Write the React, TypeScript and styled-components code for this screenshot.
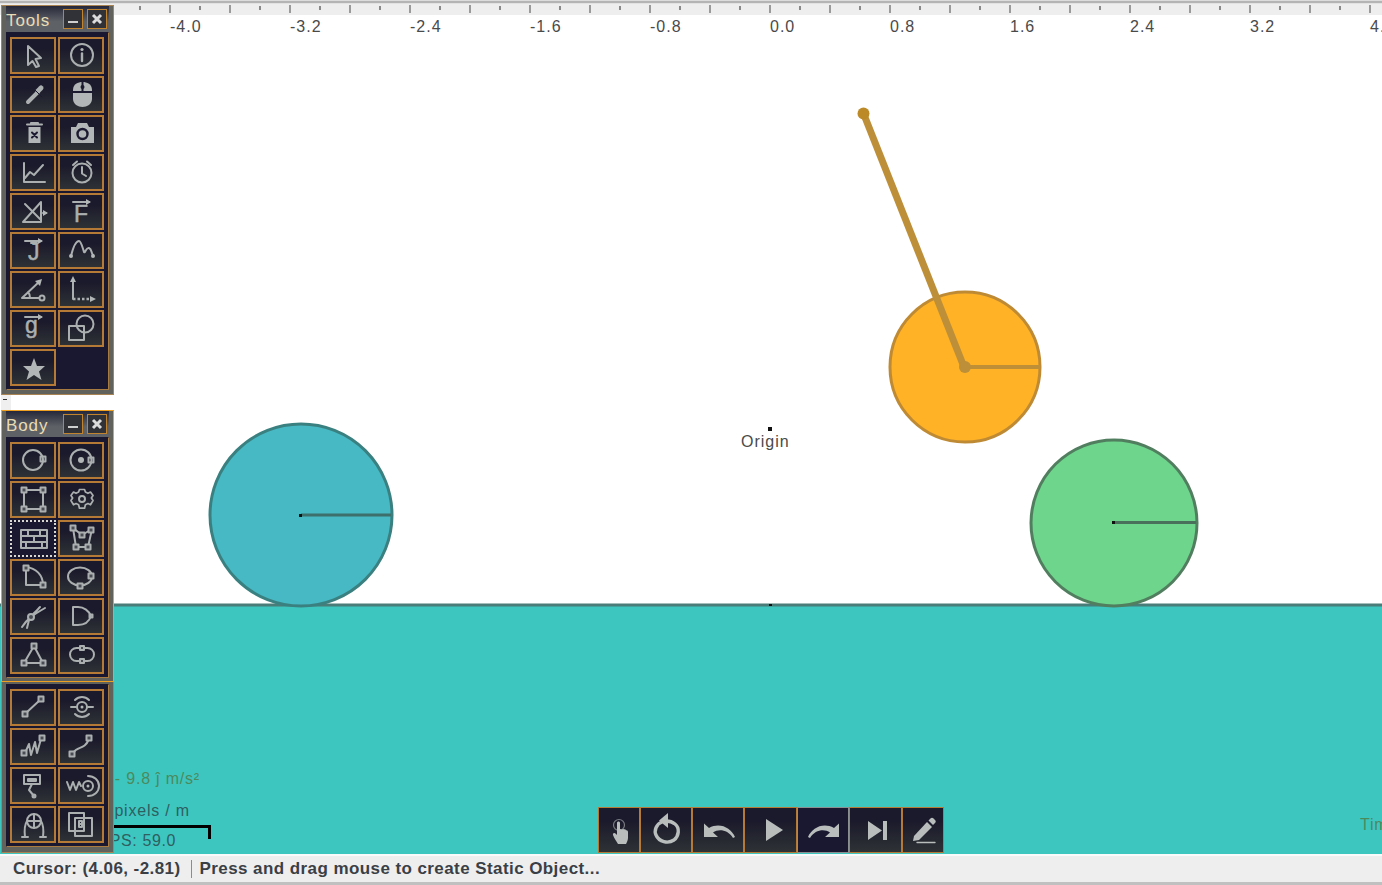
import { ReactNode } from 'react'
import styled, { createGlobalStyle } from 'styled-components'

const GlobalStyle = createGlobalStyle`
  html, body {
    margin: 0;
    padding: 0;
    background: #ffffff;
    overflow: hidden;
  }
  body {
    font-family: "Liberation Sans", Arial, sans-serif;
  }
`

const S = {
  Root: styled.div`
    position: relative;
    width: 1382px;
    height: 885px;
    display: flex;
    flex-direction: column;
    overflow: hidden;
  `,
  TopEdge: styled.div`
    height: 4px;
    background: linear-gradient(#dcdcdc 0 1px, #b4b4b4 1px 3px, #e2e2e2 3px);
  `,
  Ruler: styled.svg`
    display: block;
    flex: none;
    height: 11px;
    width: 1382px;
    background: #eeeeee;
  `,
  Stage: styled.div`
    position: relative;
    flex: 1;
    background: #ffffff;
    overflow: hidden;
  `,
  Scene: styled.svg`
    position: absolute;
    inset: 0;
    width: 100%;
    height: 100%;
  `,
  RulerLabels: styled.div`
    position: absolute;
    top: 3px;
    left: 170px;
    display: flex;
    font-size: 16px;
    letter-spacing: 1px;
    line-height: 18px;
    color: #4a4a4a;
  `,
  RulerLabel: styled.span`
    flex: none;
    width: 120px;
  `,
  Origin: styled.span`
    position: absolute;
    left: 741px;
    top: 418px;
    font-size: 16px;
    letter-spacing: 1px;
    line-height: 18px;
    color: #4a4a4a;
  `,
  Gravity: styled.span`
    position: absolute;
    right: 1182px;
    top: 755px;
    font-size: 16px;
    letter-spacing: 0.8px;
    line-height: 18px;
    color: #4c8a5c;
    white-space: nowrap;
  `,
  Scale: styled.span`
    position: absolute;
    right: 1192px;
    top: 787px;
    font-size: 16px;
    letter-spacing: 0.8px;
    line-height: 18px;
    color: #2f5f5f;
    white-space: nowrap;
  `,
  ScaleBar: styled.div`
    position: absolute;
    left: 104px;
    top: 810px;
    width: 104px;
    height: 11px;
    border-top: 3px solid #000000;
    border-right: 3px solid #000000;
  `,
  Fps: styled.span`
    position: absolute;
    right: 1206px;
    top: 817px;
    font-size: 16px;
    letter-spacing: 0.6px;
    line-height: 18px;
    color: #2f5f5f;
    white-space: nowrap;
  `,
  Time: styled.span`
    position: absolute;
    left: 1360px;
    top: 801px;
    font-size: 16px;
    letter-spacing: 0.8px;
    line-height: 18px;
    color: #4c8a5c;
    white-space: nowrap;
  `,
  Dock: styled.div`
    position: absolute;
    left: 1px;
    top: 5px;
    width: 113px;
    display: flex;
    flex-direction: column;
  `,
  Tick: styled.div`
    height: 15px;
    margin-right: 103px;
    background: #efefef;
    position: relative;
    &::after {
      content: '';
      position: absolute;
      left: 2px;
      top: 4px;
      width: 4px;
      height: 1px;
      background: #333333;
    }
  `,
  Panel: styled.section<{ $active?: boolean; $bare?: boolean }>`
    box-sizing: border-box;
    background: #62625c;
    border: 1px solid ${p => (p.$active ? '#f0a020' : '#a98452')};
    border-top-width: ${p => (p.$bare ? 0 : 1)}px;
    padding: ${p => (p.$bare ? '2px 4px 5px' : p.$active ? '0 4px 3px' : '0 4px 4px')};
  `,
  TitleBar: styled.div`
    height: 26px;
    display: flex;
    align-items: center;
    gap: 4px;
    padding-right: 2px;
    background: linear-gradient(#26283a, #5e6166 60%);
  `,
  Title: styled.span`
    flex: 1;
    padding-top: 3px;
    font-size: 17px;
    letter-spacing: 0.9px;
    color: #e9dcb4;
  `,
  WindowButton: styled.button`
    box-sizing: border-box;
    width: 20px;
    height: 20px;
    padding: 0;
    display: grid;
    place-items: center;
    background: #303238;
    border: 1px solid #c2832f;
  `,
  Frame: styled.div`
    display: grid;
    grid-template-columns: 46px 46px;
    grid-auto-rows: 37px;
    column-gap: 2px;
    row-gap: 2px;
    padding: 4px 4px 3px 3px;
    background: #1a1830;
    border: 1px solid #1a1830;
    border-right-color: #a87c40;
    border-bottom-color: #a87c40;
  `,
  ToolButton: styled.button<{ $dotted?: boolean }>`
    box-sizing: border-box;
    padding: 0;
    width: 46px;
    height: 37px;
    background: ${p => (p.$dotted ? '#1a1830' : 'linear-gradient(#1b1a2c 30%, #2e3235)')};
    border: ${p => (p.$dotted ? '2px dotted #d8d8d0' : '2px solid #b57a35')};
    display: block;
    overflow: hidden;
  `,
  Glyph: styled.svg`
    display: block;
    margin: -2px;
    width: 46px;
    height: 37px;
    fill: none;
    stroke: #abafaf;
    stroke-width: 2;
    stroke-linecap: round;
    stroke-linejoin: round;
    .solid {
      fill: #b2b6b6;
      stroke: none;
    }
    .letter {
      fill: #abafaf;
      stroke: #abafaf;
      stroke-width: 0.5;
      font-family: "Liberation Sans", Arial, sans-serif;
      font-size: 23px;
    }
  `,
  Toolbar: styled.div`
    position: absolute;
    left: 598px;
    bottom: 1px;
    display: flex;
    height: 46px;
  `,
  BarButton: styled.button<{ $w: number; $flat?: boolean }>`
    box-sizing: border-box;
    padding: 0;
    width: ${p => p.$w}px;
    height: 46px;
    background: ${p => (p.$flat ? '#1a1830' : 'linear-gradient(#1b1a2c 30%, #2e3235)')};
    border: 1px solid ${p => (p.$flat ? '#8b8f8f' : '#b57a35')};
    overflow: hidden;
  `,
  BarGlyph: styled.svg<{ $w: number }>`
    display: block;
    margin: -1px;
    width: ${p => p.$w}px;
    height: 46px;
    fill: #b9bebd;
    stroke: none;
    .line {
      fill: none;
      stroke: #b9bebd;
      stroke-linecap: round;
      stroke-linejoin: round;
    }
  `,
  Status: styled.footer`
    box-sizing: border-box;
    flex: none;
    height: 31px;
    padding: 2px 0 5px 13px;
    display: flex;
    align-items: center;
    background: #eeeeee;
    border-top: 2px solid #fafafa;
    box-shadow: inset 0 -4px 0 -1px #c0c0c0, inset 0 -1px 0 #d8d8d8;
    font-size: 17px;
    font-weight: 700;
    letter-spacing: 0.42px;
    color: #3a3f46;
  `,
  Separator: styled.span`
    width: 1px;
    height: 18px;
    margin: 0 8px 0 10px;
    background: #8c8c8c;
  `,
  Ticks: styled.g`
    stroke: #9a9a9a;
  `
}

const Handle = ({ x, y, s = 5 }: { x: number; y: number; s?: number }) => (
  <rect x={x - s / 2} y={y - s / 2} width={s} height={s} />
)

const Arrow = ({ x1, x2, y }: { x1: number; x2: number; y: number }) => (
  <>
    <path d={`M${x1} ${y}H${x2}`} />
    <path className='solid' d={`M${x2 + 2} ${y}l-5 -3v6z`} />
  </>
)

const tools: ReactNode[] = [
  <path d='M18 9L31 21 25.500 22 29 29 26 30 22.500 24 18 28Z' />,
  <>
    <circle cx='24' cy='18' r='11' />
    <circle className='solid' cx='24' cy='12.500' r='1.600' />
    <path strokeWidth='2.400' d='M24 16.500V24' />
  </>,
  <>
    <path strokeWidth='4' d='M18 26L28 16' />
    <path strokeWidth='5' d='M28 15L31 12' />
    <path stroke='#1c1a30' strokeWidth='1' d='M24 13L32 21' />
  </>,
  <>
    <path className='solid' d='M15 14C15 8 20 6 24.500 6S34 8 34 14V23C34 28 29 31 24.500 31S15 28 15 23Z' />
    <path stroke='#1c1a30' d='M15 16H34M24.500 6V16' />
    <circle cx='24.500' cy='11' r='1' stroke='#1c1a30' />
  </>,
  <>
    <path d='M17 9.500H32M21 9.500V8H28V9.500' />
    <path className='solid' d='M18.500 12H30.500V28H18.500Z' />
    <path stroke='#1c1a30' strokeWidth='2' d='M22 17.500L27 22.500M27 17.500L22 22.500' />
  </>,
  <>
    <path className='solid' d='M13 12H18L20 8H29L31 12H36V28H13Z' />
    <circle cx='24.500' cy='19' r='5' stroke='#1c1a30' strokeWidth='2.400' />
  </>,
  <path d='M14 9V28H35M15 24L20 18 24 21 33 11' />,
  <>
    <circle cx='24' cy='19' r='9.500' />
    <path d='M24 13V19.500L28 22M15 11L19 7.500M33 11L29 7.500' />
  </>,
  <>
    <path d='M13 29H31V9ZM15 11L30 26' />
    <Arrow x1={33} x2={36} y={20} />
  </>,
  <>
    <text className='letter' x='16' y='29'>F</text>
    <Arrow x1={15} x2={31} y={9} />
  </>,
  <>
    <text className='letter' x='18' y='28'>J</text>
    <path d='M21 11H27' />
    <Arrow x1={15} x2={31} y={9} />
  </>,
  <>
    <path d='M13 24C16 12 19 9 21 9S24 14 26 20C27 22 28 15 31 16S33 21 35 23' />
    <circle className='solid' cx='13' cy='24' r='2' />
    <circle className='solid' cx='35' cy='24' r='2' />
  </>,
  <>
    <path d='M12 27L30 10M12 27H29M18 21C20 23 20 25 20 27' />
    <path className='solid' d='M32 8L25 10 30 15Z' />
    <circle cx='32' cy='27' r='2.500' />
  </>,
  <>
    <path d='M15 10V28' />
    <path strokeWidth='2.400' strokeDasharray='2.500 2' strokeLinecap='butt' d='M15 28H34' />
    <path className='solid' d='M15 5L12 11H18ZM38 28L32 25V31Z' />
  </>,
  <>
    <text className='letter' x='15' y='23'>g</text>
    <Arrow x1={15} x2={31} y={7} />
  </>,
  <>
    <rect x='11' y='16' width='15' height='14' />
    <circle cx='27' cy='14' r='8.500' />
  </>,
  <path className='solid' d='M24 9L27 17H35L29 22.500 31.500 31 24 26 16.500 31 19 22.500 13 17H21Z' />
]

const bodies: { icon: ReactNode; dotted?: boolean }[] = [
  { icon: <><circle cx='23' cy='18' r='10' /><Handle x={33} y={17} /></> },
  { icon: <><circle cx='23' cy='18' r='10.500' /><circle className='solid' cx='23' cy='18' r='3' /><Handle x={33} y={18} /></> },
  { icon: <><rect x='14' y='9' width='19' height='19' /><g fill='#4a4c54'><Handle x={14} y={9} /><Handle x={33} y={9} /><Handle x={14} y={28} /><Handle x={33} y={28} /></g></> },
  { icon: <><path transform='translate(3.600 1.700) scale(0.85)' d='M21 8H27L28 11 31 12.500 34 11 37 15 35 18 37 21 34 26 31 24.500 28 26 27 30H21L20 26 17 24.500 14 26 11 21 13 18 11 15 14 11 17 12.500 20 11Z' /><circle cx='24' cy='18' r='3' /></> },
  { dotted: true, icon: <path d='M11 10H37V28H11ZM11 16H37M11 22H37M18 10V16M30 10V16M24 16V22M16 22V28M32 22V28' /> },
  { icon: <><path d='M15 8L24 15 34 9 30 27H18Z' /><g fill='#4a4c54'><Handle x={15} y={8} /><Handle x={24} y={15} /><Handle x={33} y={10} /><Handle x={18} y={27} /><Handle x={30} y={27} /></g></> },
  { icon: <><path d='M16 8V26H33C33 16 26 9 16 8Z' /><g fill='#4a4c54'><Handle x={16} y={9} /><Handle x={33} y={26} /></g></> },
  { icon: <><ellipse cx='22' cy='17.500' rx='12' ry='9' /><g fill='#4a4c54'><Handle x={33} y={17} /><Handle x={22} y={27} /></g></> },
  { icon: <><path d='M12 29C17 21 23 17 35 10M17 30L19 22 24 15C27 13 28 11 30 9' /><circle cx='21' cy='19' r='3' fill='#4a4c54' /></> },
  { icon: <><path d='M15 9H20C26 9 31 13 33 18 31 24 26 27 20 27H15Z' /><Handle x={33} y={18} s={3} /></> },
  { icon: <><path d='M24 9L33 26H14Z' /><g fill='#4a4c54'><Handle x={24} y={9} /><Handle x={14} y={26} /><Handle x={33} y={26} /></g></> },
  { icon: <><rect x='12' y='11' width='24' height='13' rx='6.500' /><g fill='#4a4c54'><Handle x={24} y={11} s={4} /><Handle x={24} y={24} s={4} /></g></> }
]

const joints: ReactNode[] = [
  <><path d='M16 24L30 11' /><g fill='#4a4c54'><Handle x={15} y={25} /><Handle x={31} y={10} /></g></>,
  <><circle cx='24' cy='18' r='5' /><circle className='solid' cx='24' cy='18' r='1.500' /><path d='M13 18H18M30 18H35M17 11C21 7 27 7 31 11M17 25C21 29 27 29 31 25' /></>,
  <><path d='M15 25L19 16 21 27 25 14 27 25 31 11' /><g fill='#4a4c54'><Handle x={14} y={25} /><Handle x={32} y={10} /></g></>,
  <><path d='M15 25C20 17 26 23 31 11' /><g fill='#4a4c54'><Handle x={14} y={26} /><Handle x={31} y={10} /></g></>,
  <><path d='M14 8H30V17H14ZM18 12H26V14H18ZM22 17L19 23 24 29' /><circle cx='24' cy='29' r='1.500' /></>,
  <><path d='M9 15L12 23 15 15 18 23 21 15 23 19' /><circle cx='30' cy='19' r='5' /><circle className='solid' cx='30' cy='19' r='1.500' /><path d='M30 9C36 9 41 13 41 19S36 29 30 29' /></>,
  <><circle cx='24' cy='15' r='7' /><path d='M17 15H31M24 8V22M15 31C14 22 15 18 17 15M33 31C34 22 33 18 31 15M12 31H18M30 31H36' /></>,
  <><rect x='11' y='7' width='15' height='18' /><rect x='17' y='12' width='17' height='18' /><path d='M21 15H24V21H21ZM21 18H24' /></>
]

const BarIcon = ({ w, flat, children }: { w: number; flat?: boolean; children: ReactNode }) => (
  <S.BarButton $w={w} $flat={flat} type='button'>
    <S.BarGlyph $w={w} viewBox={`0 0 ${w} 46`}>{children}</S.BarGlyph>
  </S.BarButton>
)

const Palette = ({ items }: { items: { icon: ReactNode; dotted?: boolean }[] }) => (
  <S.Frame>
    {items.map((item, i) => (
      <S.ToolButton key={i} $dotted={item.dotted} type='button'>
        <S.Glyph viewBox='0 0 46 37'>{item.icon}</S.Glyph>
      </S.ToolButton>
    ))}
  </S.Frame>
)

const TitleBar = ({ title }: { title: string }) => (
  <S.TitleBar>
    <S.Title>{title}</S.Title>
    <S.WindowButton type='button'>
      <svg width='12' height='12' viewBox='0 0 12 12'>
        <rect x='1' y='8' width='10' height='2' fill='#cfcfcf' />
      </svg>
    </S.WindowButton>
    <S.WindowButton type='button'>
      <svg width='12' height='12' viewBox='0 0 12 12'>
        <path d='M2 2L10 10M10 2L2 10' stroke='#dcdcdc' strokeWidth='3' />
      </svg>
    </S.WindowButton>
  </S.TitleBar>
)

const rulerTicks = Array.from({ length: 46 }, (_, i) => 20 + i * 30)
const rulerValues = ['-4.0', '-3.2', '-2.4', '-1.6', '-0.8', '0.0', '0.8', '1.6', '2.4', '3.2', '4.0']

export default function App() {
  return (
    <S.Root>
      <GlobalStyle />
      <S.TopEdge />
      <S.Ruler viewBox='0 0 1382 11'>
        <S.Ticks>
          {rulerTicks.map((x, i) =>
            (x - 170) % 60 === 0 ? (
              <rect key={i} x={x - 1} y='1' width='2' height='8' fill='#9a9a9a' stroke='none' />
            ) : (
              <rect key={i} x={x - 1} y='2' width='2' height='4' fill='#8a8a8a' stroke='none' />
            )
          )}
        </S.Ticks>
      </S.Ruler>
      <S.Stage>
        <S.Scene viewBox='0 15 1382 839'>
          <rect x='0' y='605' width='1382' height='249' fill='#3dc6c0' />
          <path d='M0 605H1382' stroke='#4a7d79' strokeWidth='3' />
          <rect x='769' y='604' width='3' height='2' fill='#111111' />
          <rect x='768' y='427' width='4' height='4' fill='#111111' />

          <circle cx='301' cy='515' r='91' fill='#46b9c4' stroke='#3b8080' strokeWidth='3' />
          <path d='M301 515H391' stroke='#3d6f6c' strokeWidth='3' />
          <rect x='299' y='514' width='3' height='3' fill='#111111' />

          <circle cx='1114' cy='523' r='83' fill='#6dd68c' stroke='#527e60' strokeWidth='3' />
          <path d='M1114 522.500H1196' stroke='#48705a' strokeWidth='3' />
          <rect x='1112' y='521' width='3' height='3' fill='#111111' />

          <circle cx='965' cy='367' r='75' fill='#ffb226' stroke='#bf8a34' strokeWidth='3' />
          <path d='M965 367H1040' stroke='#bf8f38' strokeWidth='4' />
          <path d='M964 367L863.500 113.500' stroke='#bd8f38' strokeWidth='7' />
          <circle cx='965' cy='367' r='6' fill='#bd8f38' />
          <circle cx='863.500' cy='113.500' r='6' fill='#bd8a28' />
        </S.Scene>

        <S.RulerLabels>
          {rulerValues.map(v => (
            <S.RulerLabel key={v}>{v}</S.RulerLabel>
          ))}
        </S.RulerLabels>
        <S.Origin>Origin</S.Origin>
        <S.Gravity>g = - 9.8 ĵ m/s²</S.Gravity>
        <S.Scale>30 pixels / m</S.Scale>
        <S.ScaleBar />
        <S.Fps>FPS: 59.0</S.Fps>
        <S.Time>Time: 0.0</S.Time>

        <S.Toolbar>
          <BarIcon w={42}>
            <circle className='line' cx='21' cy='18' r='5.500' strokeWidth='1.200' opacity='0.6' />
            <path d='M19 16C19 14 22 14 22 16V22L24 22.500C24.500 21.500 26 22 26 22.500 26.500 22 28 22.500 28 23.500 28.500 23 30 23.500 30 25V31C30 33 28.500 36 28 37H20C19 35 16 31 15 28 14.500 26 16.500 25 18 27L19 28Z' />
          </BarIcon>
          <BarIcon w={52}>
            <path className='line' strokeWidth='3.400' d='M22 15C16 17 14 24 16 28 19 35 28 37 34 33 39 29 40 21 35 17 32 14.500 29 14 26 14' />
            <path d='M28 6V21L19 13.500Z' />
          </BarIcon>
          <BarIcon w={52}>
            <path d='M12 16.500V30H26L21 25.500C27 21.500 36 23 41 31L43 30C39 21 28 15 17 21Z' />
          </BarIcon>
          <BarIcon w={53}>
            <path d='M22 12L39 23 22 34Z' />
          </BarIcon>
          <BarIcon w={52} flat>
            <path d='M42 16.500V30H28L33 25.500C27 21.500 18 23 13 31L11 30C15 21 26 15 37 21Z' />
          </BarIcon>
          <BarIcon w={53}>
            <path d='M19 14L33 23.500 19 33Z' />
            <rect x='34' y='14' width='4' height='19' />
          </BarIcon>
          <BarIcon w={42}>
            <path d='M11 34L12 29 25 15 30 20 17 33Z' />
            <path d='M26.500 13.500L28.500 11.500C29.500 10.500 30.500 10.500 31.500 11.500L33 13C34 14 34 15 33 16L31 18Z' />
            <path className='line' strokeWidth='1.400' d='M15 35.500H33' />
          </BarIcon>
        </S.Toolbar>
      </S.Stage>
      <S.Status>
        <span>Cursor: (4.06, -2.81)</span>
        <S.Separator />
        <span>Press and drag mouse to create Static Object...</span>
      </S.Status>

      <S.Dock>
        <S.Panel>
          <TitleBar title='Tools' />
          <Palette items={tools.map(icon => ({ icon }))} />
        </S.Panel>
        <S.Tick />
        <S.Panel $active>
          <TitleBar title='Body' />
          <Palette items={bodies} />
        </S.Panel>
        <S.Panel $bare>
          <Palette items={joints.map(icon => ({ icon }))} />
        </S.Panel>
      </S.Dock>
    </S.Root>
  )
}
